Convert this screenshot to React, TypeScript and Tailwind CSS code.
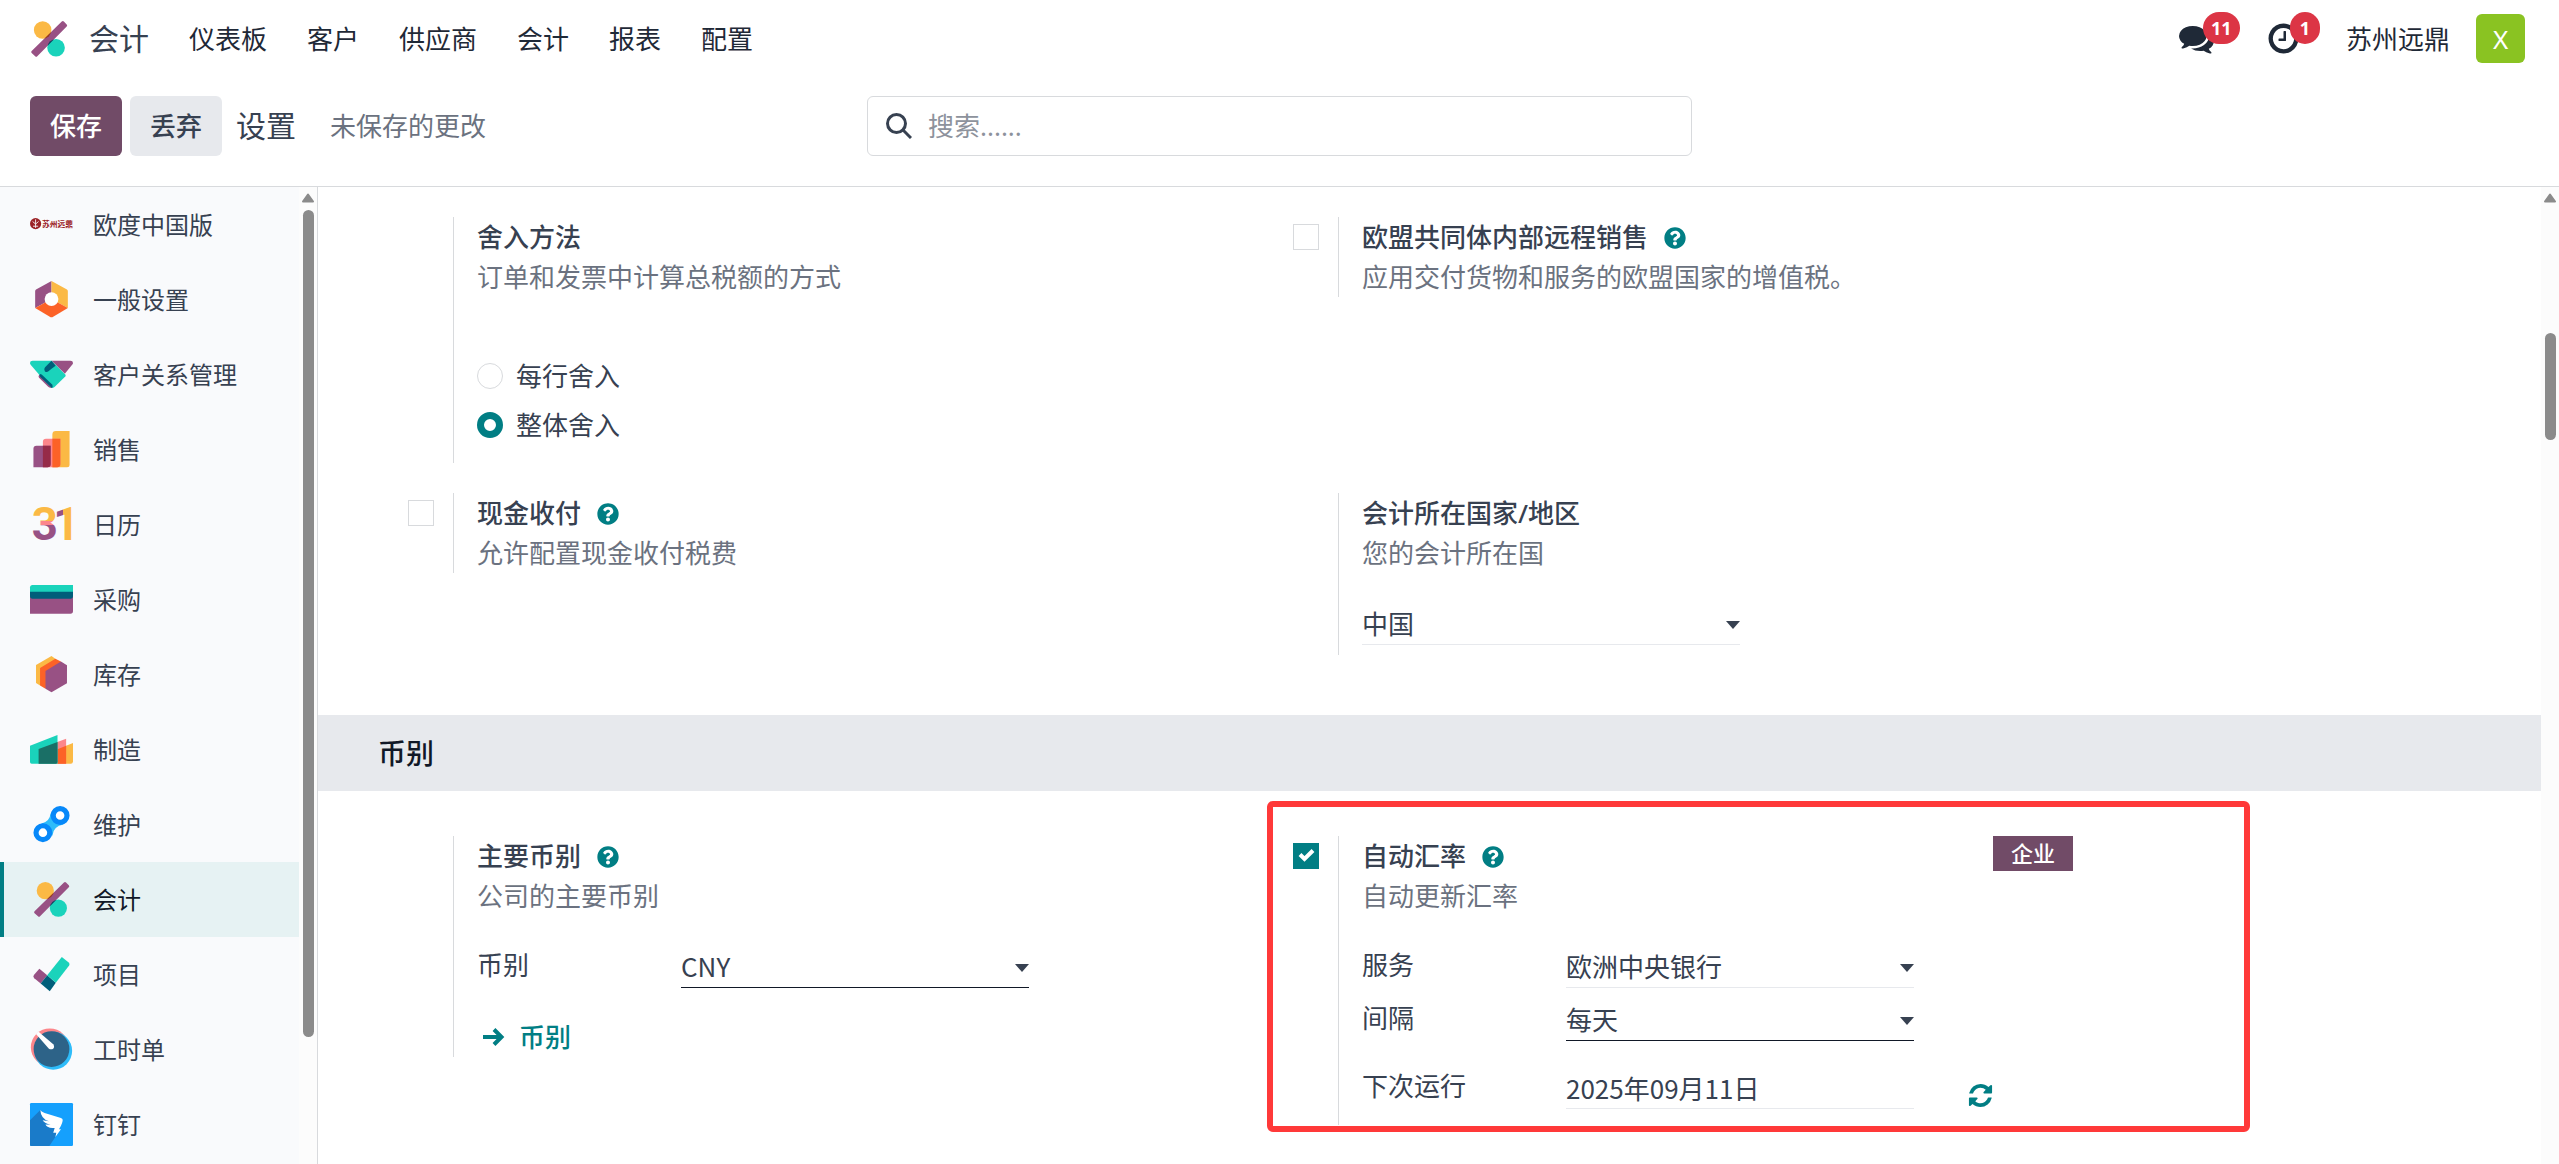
import { useState } from "react";
import type { ReactNode } from "react";
import { FaQuestionCircle } from "react-icons/fa";

const NAV_ITEMS = ["仪表板", "客户", "供应商", "会计", "报表", "配置"];

const App = () => {
  return (
    <div className="flex h-screen w-full flex-col overflow-hidden bg-white font-['Noto_Sans','Noto_Sans_CJK_SC',sans-serif] text-[26px] leading-10 text-[#374151]">
      <Navbar />
      <ControlPanel />
      <div className="flex min-h-0 flex-1 border-t border-[#d8dadd]">
        <Sidebar />
        <Settings />
      </div>
    </div>
  );
};

export default App;

const Navbar = () => {
  return (
    <header className="flex h-[77px] shrink-0 items-center pr-[34px] pl-[27px] text-[#1f2937]">
      <a href="#home" className="flex items-center gap-[18px] text-[30px] text-[#374151]">
        <AccountingIcon className="size-11" />
        会计
      </a>
      <nav className="ml-10 flex flex-1 gap-10">
        {NAV_ITEMS.map((item) => (
          <a key={item} href="#menu">
            {item}
          </a>
        ))}
      </nav>
      <div className="flex items-center">
        <button aria-label="消息" className="relative mr-[52px]">
          <svg viewBox="0 0 1792 1792" className="size-[35px] fill-current">
            <path d="M1408 768q0 139-94 257t-256.5 186.5-353.5 68.5q-86 0-176-16-124 88-278 128-36 9-86 16h-3q-11 0-20.5-8t-11.5-21q-1-3-1-6.5t.5-6.5 2-6l2.5-5 3.5-5.5 4-5 4.5-5 4-4.5q5-6 23-25t26-29.5 22.5-29 25-38.5 20.5-44q-124-72-195-177t-71-224q0-139 94-257t256.5-186.5 353.5-68.5 353.5 68.5 256.5 186.5 94 257zm384 256q0 120-71 224.5t-195 176.5q10 24 20.5 44t25 38.5 22.5 29 26 29.5 23 25q1 1 4 4.5t4.5 5 4 5 3.5 5.5l2.5 5 2 6 .5 6.5-1 6.5q-3 14-13 22t-22 7q-50-7-86-16-154-40-278-128-90 16-176 16-271 0-472-132 58 4 88 4 161 0 309-45t264-129q125-92 192-212t67-254q0-77-23-152 129 71 204 178t75 230z" />
          </svg>
          <CountBadge>11</CountBadge>
        </button>
        <button aria-label="活动" className="relative mr-[45px]">
          <svg viewBox="0 0 1792 1792" className="size-[35px] fill-current">
            <path d="M1024 544v448q0 14-9 23t-23 9h-320q-14 0-23-9t-9-23v-64q0-14 9-23t23-9h224v-352q0-14 9-23t23-9h64q14 0 23 9t9 23zm416 352q0-148-73-273t-198-198-273-73-273 73-198 198-73 273 73 273 198 198 273 73 273-73 198-198 73-273zm224 0q0 209-103 385.5t-279.5 279.5-385.5 103-385.5-103-279.5-279.5-103-385.5 103-385.5 279.5-279.5 385.5-103 385.5 103 279.5 279.5 103 385.5z" />
          </svg>
          <CountBadge>1</CountBadge>
        </button>
        <button className="mr-[26px]">苏州远鼎</button>
        <button className="size-[49px] rounded-md bg-[#8ac322] text-white">
          X
        </button>
      </div>
    </header>
  );
};

const CountBadge = ({ children }: { children: ReactNode }) => {
  return (
    <span className="absolute -top-[9px] left-6 flex h-8 min-w-[30px] items-center justify-center rounded-full bg-[#dc3545] px-2 text-lg font-bold text-white">
      {children}
    </span>
  );
};

const ControlPanel = () => {
  return (
    <div className="grid h-[109px] shrink-0 grid-cols-3 items-start gap-3 px-[30px] pt-[19px]">
      <div className="flex items-center">
        <button className="mr-2 h-[60px] rounded-md bg-[#714b67] px-5 font-medium text-white">
          保存
        </button>
        <button className="mr-3.5 h-[60px] rounded-md bg-[#e7e9ed] px-5 font-medium">
          丢弃
        </button>
        <h1 className="mr-[34px] text-[30px]">设置</h1>
        <span className="text-[#6b7280]">未保存的更改</span>
      </div>
      <label className="flex h-[60px] items-center rounded-md border border-[#d8dadd] px-[18px]">
        <svg
          viewBox="0 0 26 26"
          className="size-[26px]"
          fill="none"
          stroke="currentColor"
          strokeWidth="3"
        >
          <circle cx="10.5" cy="10.5" r="9" />
          <path d="M17 17l8 8" />
        </svg>
        <input
          type="search"
          aria-label="搜索"
          placeholder="搜索......"
          className="ml-4 min-w-0 flex-1 outline-none placeholder:text-[#8d929c]"
        />
      </label>
    </div>
  );
};

const Sidebar = () => {
  const [active, setActive] = useState("会计");

  return (
    <aside className="flex w-[318px] shrink-0 border-r border-[#d8dadd]">
      <div className="flex-1 overflow-hidden bg-[#f9fafc] text-2xl">
        {APPS.map(({ name, Icon }) => (
          <button
            key={name}
            onClick={() => setActive(name)}
            className={
              name === active
                ? "flex h-[75px] w-full items-center gap-5 border-l-4 border-[#017e84] bg-[#e6f2f3] pl-[26px] text-[#111827]"
                : "flex h-[75px] w-full items-center gap-5 pl-[30px]"
            }
          >
            <Icon className="size-[43px] shrink-0 overflow-visible" />
            {name}
          </button>
        ))}
      </div>
      <ScrollBar>
        <div className="mt-[7px] h-[827px] w-[11px] shrink-0 rounded-full bg-[#8b8b8b]" />
      </ScrollBar>
    </aside>
  );
};

const ScrollBar = ({ children }: { children: ReactNode }) => {
  return (
    <div
      aria-hidden="true"
      className="flex w-[18px] shrink-0 flex-col items-center bg-[#fcfcfc] pt-1.5"
    >
      <svg viewBox="0 0 12 10" className="h-2.5 w-3 shrink-0">
        <path
          d="M6 1.5 11 8.5H1z"
          fill="#8b8b8b"
          stroke="#8b8b8b"
          strokeWidth="2"
          strokeLinejoin="round"
        />
      </svg>
      {children}
    </div>
  );
};

const Settings = () => {
  return (
    <main className="flex min-w-0 flex-1">
      <div className="min-w-0 flex-1 overflow-hidden">
        <div className="grid max-w-[1860px] grid-cols-2 items-start gap-y-[30px] pt-[30px] pb-[60px] pl-[90px]">
          <Setting title="舍入方法" description="订单和发票中计算总税额的方式">
            <fieldset
              aria-label="舍入方法"
              className="flex flex-col gap-[9px] pt-[59px] pb-[18px]"
            >
              <RadioOption label="每行舍入" />
              <RadioOption label="整体舍入" checked />
            </fieldset>
          </Setting>
          <Setting
            title="欧盟共同体内部远程销售"
            description="应用交付货物和服务的欧盟国家的增值税。"
            help
            box="off"
          />
          <Setting
            title="现金收付"
            description="允许配置现金收付税费"
            help
            box="off"
          />
          <Setting title="会计所在国家/地区" description="您的会计所在国">
            <div className="w-[378px] pt-[29px] pb-2.5">
              <SelectField id="country" label="会计所在国家/地区" value="中国" />
            </div>
          </Setting>
        </div>

        <h2 className="bg-[#e7e9ed] px-[60px] py-[18px] text-[28px] font-medium text-[#111827]">
          币别
        </h2>

        <div className="grid max-w-[1860px] grid-cols-2 items-start pt-[45px] pl-[90px]">
          <Setting title="主要币别" description="公司的主要币别" help>
            <div className="flex pt-[29px]">
              <label htmlFor="currency" className="w-[204px]">
                币别
              </label>
              <div className="w-[348px]">
                <SelectField id="currency" value="CNY" dark />
              </div>
            </div>
            <a
              href="#currencies"
              className="mt-[29px] flex items-center gap-3.5 pl-1.5 font-medium text-[#017e84]"
            >
              <svg
                viewBox="0 0 22 18"
                className="h-[18px] w-[22px]"
                fill="none"
                stroke="currentColor"
                strokeWidth="4"
              >
                <path d="M0 9h19M11 1.5 18.5 9 11 16.5" />
              </svg>
              币别
            </a>
          </Setting>

          <div className="relative">
            <Setting
              title="自动汇率"
              description="自动更新汇率"
              help
              box="on"
              badge="企业"
            >
              <div className="grid grid-cols-[204px_348px_auto] justify-start gap-y-2.5 pt-[29px] pb-4">
                <label htmlFor="service">服务</label>
                <SelectField id="service" value="欧洲中央银行" />
                <span />
                <label htmlFor="interval">间隔</label>
                <SelectField id="interval" value="每天" dark />
                <span />
                <label htmlFor="next-run" className="pt-[15px]">
                  下次运行
                </label>
                <input
                  id="next-run"
                  defaultValue="2025年09月11日"
                  className="mt-[15px] h-[43px] w-full border-b border-[#e7e9ed] font-['Noto_Sans_CJK_SC',sans-serif] outline-none"
                />
                <button
                  aria-label="刷新"
                  className="mt-[31px] ml-[53px] h-[27px] text-[#017e84]"
                >
                  <svg viewBox="0 0 1792 1792" className="size-[27px] fill-current">
                    <path d="M1639 1056q0 5-1 7-64 268-268 434.5t-478 166.5q-146 0-282.5-55t-243.5-157l-129 129q-19 19-45 19t-45-19-19-45v-448q0-26 19-45t45-19h448q26 0 45 19t19 45-19 45l-137 137q71 66 161 102t187 36q134 0 250-65t186-179q11-17 53-117 8-23 30-23h192q13 0 22.5 9.5t9.500 22.500zm25-800v448q0 26-19 45t-45 19h-448q-26 0-45-19t-19-45 19-45l138-138q-148-137-349-137-134 0-250 65t-186 179q-11 17-53 117-8 23-30 23h-199q-13 0-22.500-9.500t-9.500-22.500v-7q65-268 270-434.500t480-166.500q146 0 284 55.500t245 156.500l130-129q19-19 45-19t45 19 19 45z" />
                  </svg>
                </button>
              </div>
            </Setting>
            <div className="pointer-events-none absolute -top-[35px] -right-[72px] -left-[26px] h-[331px] rounded-md border-6 border-[#ff3939]" />
          </div>
        </div>
      </div>
      <ScrollBar>
        <div className="mt-[130px] h-[107px] w-[11px] shrink-0 rounded-full bg-[#8b8b8b]" />
      </ScrollBar>
    </main>
  );
};

interface ISetting {
  title: string;
  description: string;
  help?: boolean;
  box?: "on" | "off";
  badge?: string;
  children?: ReactNode;
}
const Setting: React.FC<ISetting> = ({
  title,
  description,
  help,
  box,
  badge,
  children,
}) => {
  return (
    <section className="flex">
      <div className="w-[45px] shrink-0 pt-[7px]">
        {box && (
          <span className="relative block size-[26px]">
            <input
              type="checkbox"
              aria-label={title}
              defaultChecked={box === "on"}
              className="peer block size-[26px] appearance-none border border-[#d8dadd] bg-white checked:border-[#017e84] checked:bg-[#017e84]"
            />
            <svg
              viewBox="0 0 26 26"
              className="pointer-events-none absolute inset-0 hidden peer-checked:block"
              fill="none"
              stroke="#fff"
              strokeWidth="4"
            >
              <path d="M7 11.5 11.5 16 20 7.500" />
            </svg>
          </span>
        )}
      </div>
      <div className="min-w-0 flex-1 border-l border-[#d8dadd] pl-[23px]">
        <div className="flex items-start">
          <h3 className="font-medium">{title}</h3>
          {help && (
            <FaQuestionCircle className="mt-2.5 ml-4 size-[22px] text-[#017e84]" />
          )}
          {badge && (
            <span className="mr-[105px] ml-auto bg-[#714b67] px-[18px] text-[22px] leading-[35px] font-medium text-white">
              {badge}
            </span>
          )}
        </div>
        <p className="text-[#6b7280]">{description}</p>
        {children}
      </div>
    </section>
  );
};

interface IRadioOption {
  label: string;
  checked?: boolean;
}
const RadioOption: React.FC<IRadioOption> = ({ label, checked }) => {
  return (
    <label className="flex items-center gap-[13px]">
      <input
        type="radio"
        name="rounding"
        defaultChecked={checked}
        className="size-[26px] appearance-none rounded-full border border-[#d8dadd] checked:border-7 checked:border-[#017e84]"
      />
      {label}
    </label>
  );
};

interface ISelectField {
  id: string;
  value: string;
  label?: string;
  dark?: boolean;
}
const SelectField: React.FC<ISelectField> = ({ id, value, label, dark }) => {
  return (
    <div
      className={
        dark
          ? "relative h-[43px] border-b border-[#111827]"
          : "relative h-[43px] border-b border-[#e7e9ed]"
      }
    >
      <select
        id={id}
        aria-label={label}
        className="h-[42px] w-full appearance-none font-['Noto_Sans_CJK_SC',sans-serif] outline-none"
      >
        <option>{value}</option>
      </select>
      <svg
        viewBox="0 0 14 8"
        className="pointer-events-none absolute top-[19px] right-0 h-2 w-3.5 fill-current"
      >
        <path d="M0 0h14L7 8z" />
      </svg>
    </div>
  );
};

interface IIcon {
  className?: string;
}

const CompanyIcon = ({ className }: IIcon) => (
  <svg viewBox="0 0 50 50" className={className}>
    <circle cx="6.5" cy="24" r="6.5" fill="#9b2226" />
    <path
      d="M6.5 19v10M3 21.5l3.5 3 3.500-3M3.500 27h6"
      stroke="#f9fafc"
      strokeWidth="1"
      fill="none"
    />
    <text x="14" y="27.500" fontSize="9" fontWeight="700" fill="#9b2226">
      苏州远鼎
    </text>
  </svg>
);

const GeneralIcon = ({ className }: IIcon) => (
  <svg viewBox="0 0 50 50" className={className}>
    <path d="M25 3.5 7 13.5Q6 14 6 15.5V35l19-10.5z" fill="#985184" />
    <path d="M25 3.5 43 13.5Q44 14 44 15.5V35L25 24.5z" fill="#fbb945" />
    <path d="M6 35 25 24.5 44 35 26 45.5Q25 46 24 45.5z" fill="#fc6227" />
    <circle cx="25" cy="24.5" r="8" fill="#fff" />
  </svg>
);

const CrmIcon = ({ className }: IIcon) => (
  <svg viewBox="0 0 50 50" className={className}>
    <path d="M25 9h22q3 0 3 2.500 0 1-1 2.200L40.500 24z" fill="#985184" />
    <path
      d="M11 25q-2 2-.5 3.700l11 10.800q1.500 1.200 4 1.200L29 37z"
      fill="#985184"
    />
    <path
      d="M3 9h22l16 16q1 1 0 2.300L28.500 39.500q-1.500 1.300-3 1.300L11 25.500 1 14Q0 12.800 0 11.500 0 9 3 9z"
      fill="#1ad3bb"
    />
    <path
      d="M11.500 24.500q1.500 0 3 1.300L26 37q1 2-.5 3.700L12 28q-1.500-2-.5-3.500z"
      fill="#005e7a"
    />
    <path
      d="M25 9 17.500 16.500q-2 2.500-.3 4.600 2 1.900 4.300.2l3.500-3q2.500-1.800 4.800-3.600z"
      fill="#005e7a"
    />
  </svg>
);

const SalesIcon = ({ className }: IIcon) => (
  <svg viewBox="0 0 50 50" className={className}>
    <path d="M26 7.500q0-4 4-4h16V43q0 2.700-2.700 2.700H26z" fill="#fbb945" />
    <path d="M15 16q0-3.600 3.600-3.600h16.700V42q0 3.700-3.700 3.700H15z" fill="#fc868b" />
    <path d="M4 24q0-3.500 3.500-3.500H24V42q0 3.700-3.700 3.700H4z" fill="#985184" />
    <path d="M26 12.400h9.300V42q0 3.700-3.700 3.700H26z" fill="#fc6227" />
    <path d="M15 20.500h9V42q0 3.700-3.700 3.700H15z" fill="#962b48" />
  </svg>
);

const CalendarIcon = ({ className }: IIcon) => (
  <svg viewBox="0 0 50 50" className={className}>
    <defs>
      <linearGradient id="day-tens" gradientUnits="userSpaceOnUse" x1="0" y1="5" x2="0" y2="44">
        <stop offset="0.420" stopColor="#fbb945" />
        <stop offset="0.420" stopColor="#fc868b" />
        <stop offset="0.530" stopColor="#fc868b" />
        <stop offset="0.530" stopColor="#985184" />
      </linearGradient>
      <linearGradient id="day-units" gradientUnits="userSpaceOnUse" x1="30" y1="0" x2="46" y2="0">
        <stop offset="0.500" stopColor="#985184" />
        <stop offset="0.500" stopColor="#fbb945" />
      </linearGradient>
    </defs>
    <g className="font-[Roboto,sans-serif]" fontSize="53" fontWeight="700">
      <text x="2" y="43.500" fill="url(#day-tens)">
        3
      </text>
      <text x="27" y="43.500" fill="url(#day-units)">
        1
      </text>
    </g>
  </svg>
);

const PurchaseIcon = ({ className }: IIcon) => (
  <svg viewBox="0 0 50 50" className={className}>
    <path d="M0 11q0-3 3-3h47v10H0z" fill="#1ad3bb" />
    <path d="M0 18h50v20.500q0 3-3 3H0z" fill="#985184" />
    <path d="M0 16h50v5q0 3-3 3H3q-3 0-3-3z" fill="#005e7a" />
  </svg>
);

const InventoryIcon = ({ className }: IIcon) => (
  <svg viewBox="0 0 50 50" className={className}>
    <path d="M25 3.500 7 14v21l4.700 2.700L30 17l-.5-10.400z" fill="#fbb945" />
    <path d="M29.500 6.600 36 10 30 20 18 41.500l-6.300-3.800V17.500z" fill="#fc6227" />
    <path d="M36 10l7 4.300v21L25 45.700l-7-4.200V21z" fill="#985184" />
  </svg>
);

const ManufacturingIcon = ({ className }: IIcon) => (
  <svg viewBox="0 0 50 50" className={className}>
    <path d="M20 29.500 50 17.500V39q0 2.500-2.500 2.500H20z" fill="#fbb945" />
    <path d="M10 24.500 42 12.500v29H10z" fill="#fc868b" />
    <path d="M32 24.800 42 20.700v20.800H32z" fill="#fc6227" />
    <path d="M0 20.500 32 8v33.500H2q-2 0-2-2z" fill="#1ad3bb" />
    <path d="M10 24.500 32 16.200v23.300q0 2-2 2H10z" fill="#1a6f66" />
  </svg>
);

const MaintenanceIcon = ({ className }: IIcon) => (
  <svg viewBox="0 0 50 50" className={className}>
    <path d="M24 12Q23 22 13 24l13 14q1-11 13-13z" fill="#2ebcfa" />
    <circle cx="35" cy="14.500" r="8" fill="#fff" stroke="#0788f9" strokeWidth="6" />
    <circle cx="15" cy="34.500" r="8" fill="#fff" stroke="#0788f9" strokeWidth="6" />
  </svg>
);

const AccountingIcon = ({ className }: IIcon) => (
  <svg viewBox="0 0 50 50" className={className} style={{ isolation: "isolate" }}>
    <path
      d="M39.500 5.200q1.200-1.200 2.400 0l3.200 3.200q1.200 1.200 0 2.400L11.700 44.600q-1.200 1.200-2.400 0l-4-3.600q-1.200-1.200 0-2.400z"
      fill="#985184"
    />
    <circle cx="17.800" cy="14.700" r="10" fill="#fbb945" className="mix-blend-multiply" />
    <circle cx="33" cy="35" r="10" fill="#1ad3bb" className="mix-blend-multiply" />
  </svg>
);

const ProjectIcon = ({ className }: IIcon) => (
  <svg viewBox="0 0 50 50" className={className}>
    <path d="M10.900 18.400 20 26l-7.600 9.500L5 29.500q-2-1.700-.5-3.800z" fill="#985184" />
    <path d="M20 26l10 8.500-7 10-10.600-9z" fill="#005e7a" />
    <path d="M37 4.600l8 6.400q1.800 1.500.5 3.400L30 34.500 20 26z" fill="#1ad3bb" />
  </svg>
);

const TimesheetIcon = ({ className }: IIcon) => (
  <svg viewBox="0 0 50 50" className={className}>
    <circle cx="23" cy="22.500" r="22" fill="#fc868b" />
    <circle cx="27" cy="26.500" r="22" fill="#2ebcfa" />
    <circle cx="25" cy="24.500" r="20.800" fill="#2d6388" />
    <path d="M7 7 10 4.500 27 19q2 3 0 5-2.500 1.500-5 0z" fill="#fff" />
  </svg>
);

const DingTalkIcon = ({ className }: IIcon) => (
  <svg viewBox="0 0 50 50" className={className}>
    <rect width="50" height="50" rx="1.500" fill="#15a0fd" />
    <path d="M12 8 0 20v28.500Q0 50 1.500 50h21l7-10.500 4-14z" fill="#1a7bc9" />
    <path
      d="M12 8q1 2 5 3.500l19 6q2.500.8 2 3-.6 3-2 6l-2.300 4H36l-6.500 9 1.100-5H27l1.700-5.500q-5 .8-8.200-1.500-2-1-2.500-2.500l6 .3q-7-1.500-9.300-5.300l7.300 1.300Q12.500 18 12 8z"
      fill="#fff"
    />
  </svg>
);

const APPS = [
  { name: "欧度中国版", Icon: CompanyIcon },
  { name: "一般设置", Icon: GeneralIcon },
  { name: "客户关系管理", Icon: CrmIcon },
  { name: "销售", Icon: SalesIcon },
  { name: "日历", Icon: CalendarIcon },
  { name: "采购", Icon: PurchaseIcon },
  { name: "库存", Icon: InventoryIcon },
  { name: "制造", Icon: ManufacturingIcon },
  { name: "维护", Icon: MaintenanceIcon },
  { name: "会计", Icon: AccountingIcon },
  { name: "项目", Icon: ProjectIcon },
  { name: "工时单", Icon: TimesheetIcon },
  { name: "钉钉", Icon: DingTalkIcon },
];
